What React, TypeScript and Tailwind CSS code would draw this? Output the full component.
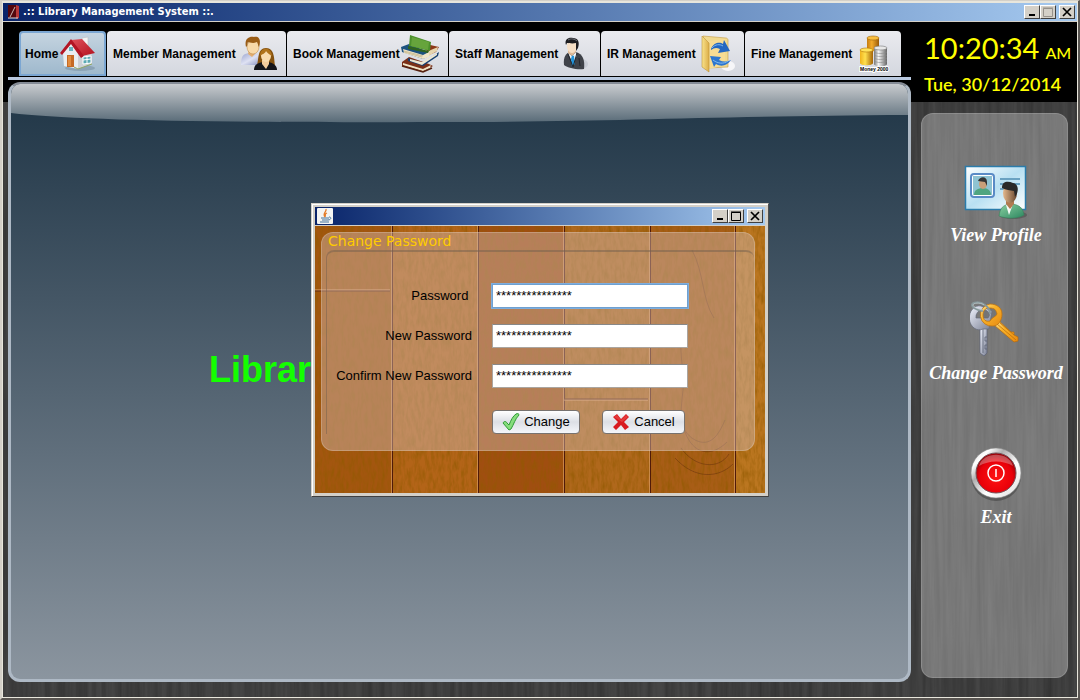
import React from "react";

const tabs = [
  { label: "Home", width: "w-[87px]", icon: <HomeIcon /> },
  { label: "Member Management", width: "w-[179px]", icon: <MembersIcon /> },
  { label: "Book Management", width: "w-[161px]", icon: <BooksIcon /> },
  { label: "Staff Management", width: "w-[151px]", icon: <StaffIcon /> },
  { label: "IR Management", width: "w-[143px]", icon: <FolderIcon /> },
  { label: "Fine Management", width: "w-[156px]", icon: <CoinsIcon /> },
];

function HomeIcon() {
  return (
    <svg width="36" height="36" viewBox="0 0 36 36" className="shrink-0" aria-hidden="true">
      <defs>
        <linearGradient id="roof" x1="0" y1="0" x2="1" y2="1">
          <stop offset="0" stopColor="#e0505a" />
          <stop offset="1" stopColor="#b3121f" />
        </linearGradient>
      </defs>
      <ellipse cx="20" cy="32" rx="15" ry="3" fill="#5b7388" opacity=".35" />
      <path d="M3 17L11 7l7 10v16L4 30z" fill="#e9edf0" />
      <path d="M18 17l14 -3v14L18 33z" fill="#cdd1d6" />
      <path d="M22 2l6 -1v9l-6 -2z" fill="#f3f3f3" stroke="#b9bfc5" strokeWidth=".6" />
      <path d="M11 4l11 -1L35 17l-13 3z" fill="url(#roof)" />
      <path d="M11 3L0 17l2 2L11 8l10 14 3 -2z" fill="#b31524" />
      <rect x="7" y="19" width="7" height="12" fill="#c56a25" />
      <rect x="8" y="20" width="3" height="10" fill="#e18b3e" />
      <rect x="9" y="11" width="4" height="4" fill="#67b3c0" />
      <path d="M23 21l8 -1v7l-8 1z" fill="#5ba9b4" stroke="#fff" />
      <path d="M27 20v8M23 24l8 -1" stroke="#fff" />
      <path d="M14 31l4 2 14 -5" stroke="#8fa763" strokeWidth="1" fill="none" />
    </svg>
  );
}

function MembersIcon() {
  return (
    <svg width="38" height="36" viewBox="0 0 38 36" className="shrink-0" aria-hidden="true">
      <defs>
        <linearGradient id="shirt" x1="0" y1="0" x2="1" y2="1">
          <stop offset="0" stopColor="#9aa4d0" />
          <stop offset=".5" stopColor="#dfe2f3" />
          <stop offset="1" stopColor="#7f8abb" />
        </linearGradient>
      </defs>
      <path d="M1 29c0-9 2-11 8-12h6c5 1 7 4 7 12z" fill="url(#shirt)" />
      <path d="M9 14h6v4l-3 3-4-3z" fill="#e2ad70" />
      <ellipse cx="13" cy="11" rx="6" ry="7" fill="#f8d9a8" stroke="#b98440" strokeWidth=".5" />
      <path d="M6 11C4 3 9 0 14 1c6-1 7 4 5 10-1-1-1-4-2-5-4 2-8 0-9 0-1 2 0 4-2 5z" fill="#9a5d16" />
      <path d="M17 29c2-5 0-17 9-17s8 12 9 17c-4 3-14 3-18 0z" fill="#85520f" />
      <path d="M14 34c0-5 3-7 9-8h5c6 1 9 4 9 8z" fill="#14151a" />
      <path d="M22 24h7v4l-3 5-4-5z" fill="#f3cc9b" />
      <ellipse cx="26" cy="20" rx="5" ry="6" fill="#f9dcb0" />
      <path d="M20 20c0-9 11-10 12 0-3-2-5-3-6-5-1 3-4 3-6 5z" fill="#b0731c" />
    </svg>
  );
}

function BooksIcon() {
  return (
    <svg width="40" height="40" viewBox="0 0 40 40" className="shrink-0" aria-hidden="true">
      <path d="M2 28l7-5 20 7 4 2-10 6L2 32z" fill="#7b3018" />
      <path d="M3 29l20 6 8-4-1 3-7 3-20-6z" fill="#f0e4c6" />
      <path d="M2 32l21 6 9-4" stroke="#552110" strokeWidth="1.500" fill="none" />
      <path d="M8 24l14 5 17-11-1 4-15 10-15-5z" fill="#163f70" />
      <path d="M10 25l12 3 15-9v2l-15 10-12-4z" fill="#ece6d2" />
      <path d="M26 10l13 3-3 5-9 4z" fill="#8c3818" />
      <path d="M26 18l12-5-1 4-10 6z" fill="#e7d5ae" />
      <path d="M1 13l8-3 19 8 1 4-6 3L2 18z" fill="#1c5280" />
      <path d="M3 15l20 6 6-3v5l-6 2-19-6z" fill="#efe5c8" />
      <path d="M4 17l19 5M4 18l18 5" stroke="#b7a77a" strokeWidth=".6" />
      <path d="M10 1l21 7-1 9-21-5z" fill="#4c902d" />
      <path d="M12 3l17 5-1 8-17-4z" fill="#66a43c" />
      <path d="M8 12l21 5-1 2-20-4z" fill="#2f6420" />
    </svg>
  );
}

function StaffIcon() {
  return (
    <svg width="34" height="36" viewBox="0 0 34 36" className="shrink-0" aria-hidden="true">
      <ellipse cx="23" cy="28" rx="7" ry="5" fill="#aab0ba" opacity=".35" />
      <path d="M6 29c-1-8 2-12 6-13h6c7 2 9 8 8 17-7 1-16-1-20-4z" fill="#3f4249" />
      <path d="M10 17l4 3 4-4 1 3-4 9-4-9z" fill="#f2f5f8" />
      <path d="M14 19l2 1 1 8-3 3-1-8z" fill="#2193da" />
      <path d="M10 18l5 13M19 17l-4 14M21 22l1 8" stroke="#22252b" />
      <path d="M10 12h8v4l-4 4-4-3z" fill="#deb997" />
      <ellipse cx="14" cy="10" rx="5" ry="7" fill="#f6dfc5" />
      <path d="M8 9C6 3 11 1 15 2c5 0 7 4 5 10l-2 3V7c-4 1-7 0-9 0z" fill="#1d1d20" />
      <path d="M10 4c3-2 7-1 9 1" stroke="#71747b" strokeWidth="1" fill="none" />
    </svg>
  );
}

function FolderIcon() {
  return (
    <svg width="36" height="38" viewBox="0 0 36 38" className="shrink-0" aria-hidden="true">
      <defs>
        <linearGradient id="folder" x1="0" y1="0" x2="1" y2="0">
          <stop offset="0" stopColor="#f9e28a" />
          <stop offset="1" stopColor="#dcae49" />
        </linearGradient>
      </defs>
      <ellipse cx="28" cy="31" rx="7" ry="5" fill="#f6f6f8" />
      <path d="M3 1l23 2c1 0 2 1 2 2v27l-20 1z" fill="#f0d98f" stroke="#c49c45" strokeWidth=".6" />
      <path d="M8 6l17-2v26L9 34z" fill="#f7dc93" />
      <path d="M2 1l7 7v29l-7-5z" fill="url(#folder)" stroke="#bd933b" strokeWidth=".6" />
      <path d="M11 14C14 7 20 7 23 9l1-4 6 11-12 2 2-4c-4-2-6-1-9 1z" fill="#2367c1" />
      <path d="M31 25c-4 6-10 7-15 4l-2 3-4-11 11 1-2 3c4 2 8 2 12 0z" fill="#2c76cf" />
      <path d="M12 13c3-4 8-4 11-2M13 25c5 4 11 4 15 1" stroke="#80b9ef" fill="none" />
    </svg>
  );
}

function CoinsIcon() {
  return (
    <svg width="34" height="38" viewBox="0 0 34 38" className="shrink-0" aria-hidden="true">
      <defs>
        <linearGradient id="gold" x1="0" y1="0" x2="1" y2="0">
          <stop offset="0" stopColor="#f0b31c" />
          <stop offset=".4" stopColor="#ffe04f" />
          <stop offset="1" stopColor="#a56407" />
        </linearGradient>
        <linearGradient id="amber" x1="0" y1="0" x2="1" y2="0">
          <stop offset="0" stopColor="#c67c10" />
          <stop offset=".4" stopColor="#f3ab2a" />
          <stop offset="1" stopColor="#9a5a08" />
        </linearGradient>
        <linearGradient id="silver" x1="0" y1="0" x2="1" y2="0">
          <stop offset="0" stopColor="#777" />
          <stop offset=".35" stopColor="#f5f5f5" />
          <stop offset="1" stopColor="#666" />
        </linearGradient>
      </defs>
      <path d="M8 3v11c0 3 12 3 12 0V3" fill="url(#amber)" />
      <ellipse cx="14" cy="3" rx="6" ry="2" fill="#f9be3e" stroke="#9a6410" strokeWidth=".6" />
      <path d="M1 15v13c0 3 13 3 13 0V15" fill="url(#gold)" />
      <ellipse cx="7.500" cy="15" rx="6.500" ry="2" fill="#ffe35c" stroke="#b27409" strokeWidth=".6" />
      <path d="M15 13v16c0 3 13 3 13 0V13" fill="url(#silver)" />
      <ellipse cx="21.500" cy="13" rx="6.500" ry="2" fill="#e8e8e8" stroke="#777" strokeWidth=".6" />
      <path d="M15 17c3 2 10 2 13 0M15 20c3 2 10 2 13 0M15 23c3 2 10 2 13 0M15 26c3 2 10 2 13 0" stroke="#888" strokeWidth=".6" fill="none" />
      <text x="1" y="36" fontSize="5" fontWeight="700" fontFamily="Liberation Sans, sans-serif" stroke="#fff" strokeWidth="2" paintOrder="stroke" fill="#000">Money 2000</text>
    </svg>
  );
}

function ProfileIcon() {
  return (
    <svg width="64" height="56" viewBox="0 0 64 56" aria-hidden="true">
      <defs>
        <linearGradient id="card" x1="0" y1="0" x2="1" y2="1">
          <stop offset="0" stopColor="#fff" />
          <stop offset=".5" stopColor="#b8e0f2" />
          <stop offset="1" stopColor="#fff" />
        </linearGradient>
        <linearGradient id="coat" x1="0" y1="0" x2="1" y2="1">
          <stop offset="0" stopColor="#8bd0a1" />
          <stop offset="1" stopColor="#2c8760" />
        </linearGradient>
        <linearGradient id="face" x1="0" y1="0" x2="1" y2="0">
          <stop offset="0" stopColor="#e4b88c" />
          <stop offset="1" stopColor="#68472f" />
        </linearGradient>
      </defs>
      <ellipse cx="49" cy="50" rx="14" ry="4" fill="#333" opacity=".35" />
      <rect x="1.500" y="1.500" width="60" height="43" fill="url(#card)" stroke="#2b7cab" strokeWidth="1.500" />
      <rect x="7" y="9" width="23" height="23" rx="3" fill="#fff" stroke="#5a8bc6" strokeWidth="2" />
      <rect x="9" y="11" width="19" height="19" fill="#8fc3d2" />
      <path d="M10 30c0-5 4-7 9-7s8 3 8 7z" fill="#4fa580" />
      <ellipse cx="19" cy="19" rx="4" ry="5" fill="#c99f78" />
      <path d="M14 16c2-5 9-5 9 1v4l-2-4z" fill="#343434" />
      <path d="M36 14h20M36 19h20M36 24h10" stroke="#6aa2c2" strokeWidth="2" />
      <path d="M35 51c1-8 4-11 11-12 9 0 13 4 14 11-6 4-18 4-25 1z" fill="url(#coat)" stroke="#39825d" strokeWidth=".6" />
      <path d="M42 40l3 10 4-11z" fill="#f5faf6" />
      <path d="M42 33h8v6l-4 5-4-5z" fill="#b17a50" />
      <ellipse cx="46" cy="28" rx="7" ry="10" fill="url(#face)" />
      <path d="M38 23c0-7 6-7 11-5 6 1 6 9 2 14l-1-6c-4-1-8-1-12-3z" fill="#292929" />
    </svg>
  );
}

function KeysIcon() {
  return (
    <svg width="52" height="56" viewBox="0 0 52 56" aria-hidden="true">
      <defs>
        <linearGradient id="goldKey" x1="0" y1="0" x2="1" y2="1">
          <stop offset="0" stopColor="#ffe69a" />
          <stop offset=".4" stopColor="#f8b22a" />
          <stop offset="1" stopColor="#e8890f" />
        </linearGradient>
        <linearGradient id="steelKey" x1="0" y1="0" x2="1" y2="1">
          <stop offset="0" stopColor="#f2f5ff" />
          <stop offset="1" stopColor="#777d91" />
        </linearGradient>
      </defs>
      <path d="M10 27h7v25l-3 3-4-3z" fill="url(#steelKey)" stroke="#5c6275" strokeWidth=".7" />
      <path d="M13 28v24M17 36h-2v4h2M17 44h-2v4h2" stroke="#5c6275" fill="none" strokeWidth=".8" />
      <path fillRule="evenodd" d="M11 5a10 12 0 1 0 2 23h6l3-18zM12 9a6 5 0 0 1 6 8H6a6 7 0 0 1 6-8z" fill="url(#steelKey)" stroke="#656b7d" strokeWidth=".7" />
      <path d="M24 24l20 17 4-1v-4l-4-2v-3h-3L28 19z" fill="url(#goldKey)" stroke="#b96a08" strokeWidth=".7" />
      <path d="M27 23l19 16M30 22l14 12" stroke="#b96a08" strokeWidth=".7" />
      <path fillRule="evenodd" d="M20 3a11 11 0 1 0 3 22c5 0 9-5 9-12 0-6-5-10-12-10zm-1 4c6 0 7 2 8 6-1 3-5 3-7 7-4 1-7-1-7-6 0-4 2-7 6-7z" fill="url(#goldKey)" stroke="#bf7410" strokeWidth=".8" />
      <path d="M13 10C8 9 2 7 2 4s8-4 13 0c3 2 5 5 5 9" stroke="#87989b" strokeWidth="2" fill="none" />
      <path d="M13 9C8 8 3 6 3 4s7-3 11 0" stroke="#c8d6d8" strokeWidth=".7" fill="none" />
    </svg>
  );
}

function PowerIcon() {
  return (
    <svg width="54" height="56" viewBox="0 0 54 56" aria-hidden="true">
      <defs>
        <linearGradient id="chrome" x1="0" y1="0" x2="1" y2="1">
          <stop offset="0" stopColor="#c8c8c8" />
          <stop offset=".2" stopColor="#fff" />
          <stop offset=".35" stopColor="#b0b0b0" />
          <stop offset=".6" stopColor="#fff" />
          <stop offset="1" stopColor="#dcdcdc" />
        </linearGradient>
        <radialGradient id="redDome" cx=".5" cy=".6" r=".55">
          <stop offset="0" stopColor="#ff1212" />
          <stop offset=".75" stopColor="#e8000a" />
          <stop offset="1" stopColor="#a00008" />
        </radialGradient>
      </defs>
      <circle cx="27" cy="29" r="25" fill="#333" opacity=".45" />
      <circle cx="27" cy="26" r="25" fill="url(#chrome)" stroke="#8a8a8a" strokeWidth=".6" />
      <circle cx="27" cy="26" r="20" fill="url(#redDome)" stroke="#74545a" />
      <path d="M10 19C14 4 40 4 44 19 34 13 20 13 10 19z" fill="#fff" opacity=".3" />
      <circle cx="27" cy="26" r="8" fill="none" stroke="#fff" strokeWidth="1.500" />
      <path d="M27 22v8" stroke="#fff" strokeWidth="1.500" />
    </svg>
  );
}

function JavaIcon() {
  return (
    <svg width="16" height="16" viewBox="0 0 16 16" className="shrink-0" aria-hidden="true">
      <rect width="16" height="16" rx="1" fill="#f4f4f2" />
      <path d="M9 1c1 3-4 4-1 8M10 5c-3 1-1 2-2 4" stroke="#e47b28" strokeWidth="1.300" fill="none" />
      <path d="M4 10h8M5 12h6M3 14h9M12 9c3 0 2 3-1 3" stroke="#43739c" fill="none" />
    </svg>
  );
}

function BookLogo() {
  return (
    <svg width="14" height="16" viewBox="0 0 14 16" className="shrink-0" aria-hidden="true">
      <path d="M1 1h8v13H1z" fill="#54070d" />
      <path d="M9 1l3 1v12l-3 1z" fill="#b73638" />
      <path d="M3 13l5-10" stroke="#c9b9b4" />
      <path d="M1 14h10" stroke="#ddd" />
    </svg>
  );
}

function CheckIcon() {
  return (
    <svg width="18" height="18" viewBox="0 0 18 18" aria-hidden="true">
      <path d="M1 10c1-2 3-2 4 0l2 2C9 7 11 3 14 1c2-1 3 0 3 1-4 4-5 9-8 14l-2 1z" fill="#86dd7c" stroke="#2e9b35" strokeLinejoin="round" />
    </svg>
  );
}

function CrossIcon() {
  return (
    <svg width="18" height="18" viewBox="0 0 18 18" aria-hidden="true">
      <path d="M1 4l4-3 4 5 5-5 3 3-5 5 5 5-4 3-4-5-5 5-3-3 5-5z" fill="#d81b20" />
      <path d="M2 4l3-2 4 5 5-5 2 2-6 5" fill="#ee504c" opacity=".6" />
    </svg>
  );
}

function WindowControls({ frozen = false }: { frozen?: boolean }) {
  const base =
    "flex h-[14px] w-4 items-center justify-center border border-t-white border-l-white border-r-[#404040] border-b-[#404040] bg-[#d4d0c8] text-black";
  return (
    <div className="flex shrink-0">
      <button aria-label="Minimize" className={base}>
        <svg width="10" height="10" viewBox="0 0 10 10"><path d="M2 8h6" stroke="currentColor" strokeWidth="2" /></svg>
      </button>
      <button aria-label="Maximize" className={base}>
        <svg width="10" height="10" viewBox="0 0 10 10">
          <path d="M.5 1.500h9v8h-9zM0 1h10" fill="none" stroke={frozen ? "#96928c" : "currentColor"} />
        </svg>
      </button>
      <button aria-label="Close" className={base + " ml-[3px]"}>
        <svg width="10" height="10" viewBox="0 0 10 10"><path d="M1 1l8 8M9 1l-8 8" stroke="currentColor" strokeWidth="1.700" /></svg>
      </button>
    </div>
  );
}

function DarkWood() {
  return (
    <svg className="absolute inset-0 h-full w-full" aria-hidden="true">
      <filter id="darkGrain" x="0" y="0" width="100%" height="100%">
        <feTurbulence type="fractalNoise" baseFrequency="0.2 0.008" numOctaves="3" seed="7" />
        <feColorMatrix values="0 0 0 0 0  0 0 0 0 0  0 0 0 0 0  0.4 0 0 0 -0.1" />
      </filter>
      <rect width="100%" height="100%" fill="#454545" />
      <rect width="100%" height="100%" filter="url(#darkGrain)" />
      <rect width="100%" height="80" fill="#000" />
    </svg>
  );
}

const seams = [77, 163, 249, 335, 420];
const planks = [
  [0, 77, "#a3560f"],
  [77, 86, "#b36418"],
  [163, 86, "#a04e10"],
  [249, 86, "#b0681c"],
  [335, 85, "#a85d16"],
  [420, 40, "#bb7620"],
] as const;

function OrangeWood() {
  return (
    <svg className="absolute inset-0 h-full w-full" aria-hidden="true">
      <defs>
        <filter id="orangeGrain" x="0" y="0" width="100%" height="100%">
          <feTurbulence type="fractalNoise" baseFrequency="0.3 0.09" numOctaves="3" seed="3" />
          <feColorMatrix values="0 0 0 0 .28  0 0 0 0 .1  0 0 0 0 0  1.300 0 0 0 -.45" />
        </filter>
      </defs>
      {planks.map(([x, w, fill]) => (
        <rect key={x} x={x} width={w} height="100%" fill={fill} />
      ))}
      <rect width="100%" height="100%" filter="url(#orangeGrain)" />
      {seams.map((x) => (
        <g key={x}>
          <rect x={x} width="1" height="100%" fill="#501a08" />
          <rect x={x - 1} width="1" height="100%" fill="#d89b62" opacity=".7" />
        </g>
      ))}
      <path d="M0 64h75M249 174h84" stroke="#dfa26d" strokeWidth="1" />
      <path d="M0 65h75M249 173h84" stroke="#602a10" strokeWidth="1" />
      <path
        d="M377 24c12 22 10 50 22 68M368 100c-6 22 2 44 0 64s-6 40 12 50c16 8 24-6 30-20M366 222c14 20 38 22 48 6M370 206c8 22 26 26 42 10M360 232c20 22 44 20 58 6"
        stroke="#552509"
        fill="none"
        opacity=".4"
      />
    </svg>
  );
}

function PasswordDialog() {
  const fields = [
    { id: "current", label: "Password\u00a0" },
    { id: "next", label: "New Password" },
    { id: "confirm", label: "Confirm New Password" },
  ];
  const buttonStyle =
    "flex h-6 items-center justify-center gap-1 rounded border border-[#77726f] bg-linear-to-b from-white via-[#dcdfe5] to-[#f4f6fa] px-2 text-[13px] text-black";
  return (
    <section
      role="dialog"
      aria-label="Change Password"
      className="flex w-[458px] flex-col border border-[#d4d0c8] border-r-[#505050] border-b-[#404040] bg-[#d4d0c8] p-[3px] shadow-[inset_1px_1px_0_#fff]"
    >
      <header className="flex h-[18px] items-center justify-between bg-linear-to-r from-[#0a246a] to-[#a6caf0] px-[2px]">
        <JavaIcon />
        <WindowControls />
      </header>
      <div className="relative mt-px bg-[#985414]">
        <OrangeWood />
        <form
          className="relative mx-[6px] mt-[6px] mr-[10px] mb-[42px] rounded-xl border border-white/20 bg-[#d2bab4]/45 pb-4"
          onSubmit={(e) => e.preventDefault()}
        >
          <h2 className="h-[17px] px-[6px] font-['DejaVu_Sans','Noto_Sans',sans-serif] text-sm leading-[17px] text-[#ffcc00]">
            Change Password
          </h2>
          <div className="ml-1 flex flex-col gap-4 rounded-tl-lg rounded-tr-lg border-t-2 border-l border-[#75604f]/50 pt-8">
            {fields.map((field, i) => (
              <div key={field.id} className="flex items-center">
                <label htmlFor={field.id} className="w-[145px] text-right text-[13px] whitespace-nowrap text-black">
                  {field.label}
                </label>
                <input
                  id={field.id}
                  defaultValue="***************"
                  className={
                    "ml-5 h-6 w-[196px] border bg-white px-[3px] text-[13px] text-black outline-0 " +
                    (i === 0 ? "border-[#6fa0d0] ring-1 ring-[#7eaede]" : "border-[#aaa5a0] border-t-[#888]")
                  }
                />
              </div>
            ))}
            <div className="mt-[6px] ml-[165px] flex gap-[22px]">
              <button type="submit" className={buttonStyle + " w-[88px]"}>
                <CheckIcon />
                Change
              </button>
              <button type="button" className={buttonStyle + " w-[83px]"}>
                <CrossIcon />
                Cancel
              </button>
            </div>
          </div>
        </form>
      </div>
    </section>
  );
}

function SideLink({ label, className, children }: { label: string; className: string; children: React.ReactNode }) {
  return (
    <button className={"flex flex-col items-center whitespace-nowrap " + className}>
      {children}
      <span className="font-['Liberation_Serif',serif] text-lg leading-5 font-bold text-white italic">{label}</span>
    </button>
  );
}

export default function App() {
  return (
    <div className="relative flex min-h-screen flex-col border-t border-r-2 border-b-2 border-l-2 border-[#d4d0c8] border-r-[#5a5652] border-b-[#5a5652] bg-[#e8e6dc] pt-[2px] pr-px pb-px pl-px font-['Liberation_Sans',Arial,sans-serif]">
      <header className="flex h-[19px] shrink-0 items-center justify-between border-b border-[#d4d0c8] bg-linear-to-r from-[#0a246a] to-[#a6caf0] pr-[2px] pl-1">
        <div className="flex items-center gap-[2px]">
          <BookLogo />
          <h1 className="font-['DejaVu_Sans_Condensed','DejaVu_Sans',sans-serif] text-[11px] leading-4 font-bold whitespace-nowrap text-white">
            .:: Library Management System ::.
          </h1>
        </div>
        <WindowControls frozen />
      </header>

      <div className="relative flex flex-1 bg-[#404040]">
        <DarkWood />
        <main className="relative flex min-w-0 flex-1 flex-col pt-[9px] pb-[15px] pl-[5px]">
          <nav className="flex gap-px pl-[11px]">
            {tabs.map((tab, i) => (
              <button
                key={tab.label}
                className={
                  "flex h-[45px] items-center justify-between rounded-t pr-2 text-xs font-bold whitespace-nowrap text-black " +
                  tab.width +
                  (i === 0
                    ? " border-2 border-[#7ba6d2] bg-linear-to-b from-[#c5d4e0] to-[#9fb9cd] pl-1"
                    : " bg-linear-to-b from-[#eaebef] to-[#d4d7df] pl-[6px]")
                }
              >
                {tab.label}
                {tab.icon}
              </button>
            ))}
          </nav>
          <div className="mt-px h-[3px] bg-[#b9c9e0]" />
          <div className="relative mt-[2px] flex flex-1 items-center overflow-hidden rounded-xl border-3 border-t-2 border-[#aeb9c5] border-t-[#858b95] bg-linear-to-b from-[#1f3546] to-[#8b959f] pl-[198px]">
            <svg className="absolute inset-x-0 top-0 h-[39px] w-full" viewBox="0 0 900 39" preserveAspectRatio="none" aria-hidden="true">
              <defs>
                <linearGradient id="gloss" x1="0" y1="0" x2="0" y2="1">
                  <stop offset="0" stopColor="#c8cbce" />
                  <stop offset="1" stopColor="#596b78" />
                </linearGradient>
              </defs>
              <path d="M0 0h900v31C700 32 600 38 430 38 200 39 60 36 0 29z" fill="url(#gloss)" />
            </svg>
            <p className="relative -mt-6 text-4xl font-bold whitespace-nowrap text-[#14ff00]">Librar</p>
          </div>
        </main>

        <aside className="relative flex w-[166px] shrink-0 flex-col">
          <div className="h-20 pt-[6px] pl-[13px] font-['Lato',sans-serif] whitespace-nowrap text-[#ffff00]">
            <p className="flex items-baseline gap-[6px] text-[29px] leading-10">
              10:20:34 <span className="text-base font-medium">AM</span>
            </p>
            <p className="text-lg leading-8 font-semibold">Tue, 30/12/2014</p>
          </div>
          <div className="mt-[11px] mr-[9px] mb-[19px] ml-[10px] flex flex-1 flex-col items-center rounded-xl border border-white/15 bg-white/30 pt-[51px] pl-[3px]">
            <SideLink label="View Profile" className="gap-1">
              <ProfileIcon />
            </SideLink>
            <SideLink label="Change Password" className="mt-14 gap-[6px]">
              <KeysIcon />
            </SideLink>
            <SideLink label="Exit" className="mt-16 gap-1">
              <PowerIcon />
            </SideLink>
          </div>
        </aside>
      </div>

      <div className="pointer-events-none absolute inset-0 flex items-center justify-center">
        <div className="pointer-events-auto">
          <PasswordDialog />
        </div>
      </div>
    </div>
  );
}
